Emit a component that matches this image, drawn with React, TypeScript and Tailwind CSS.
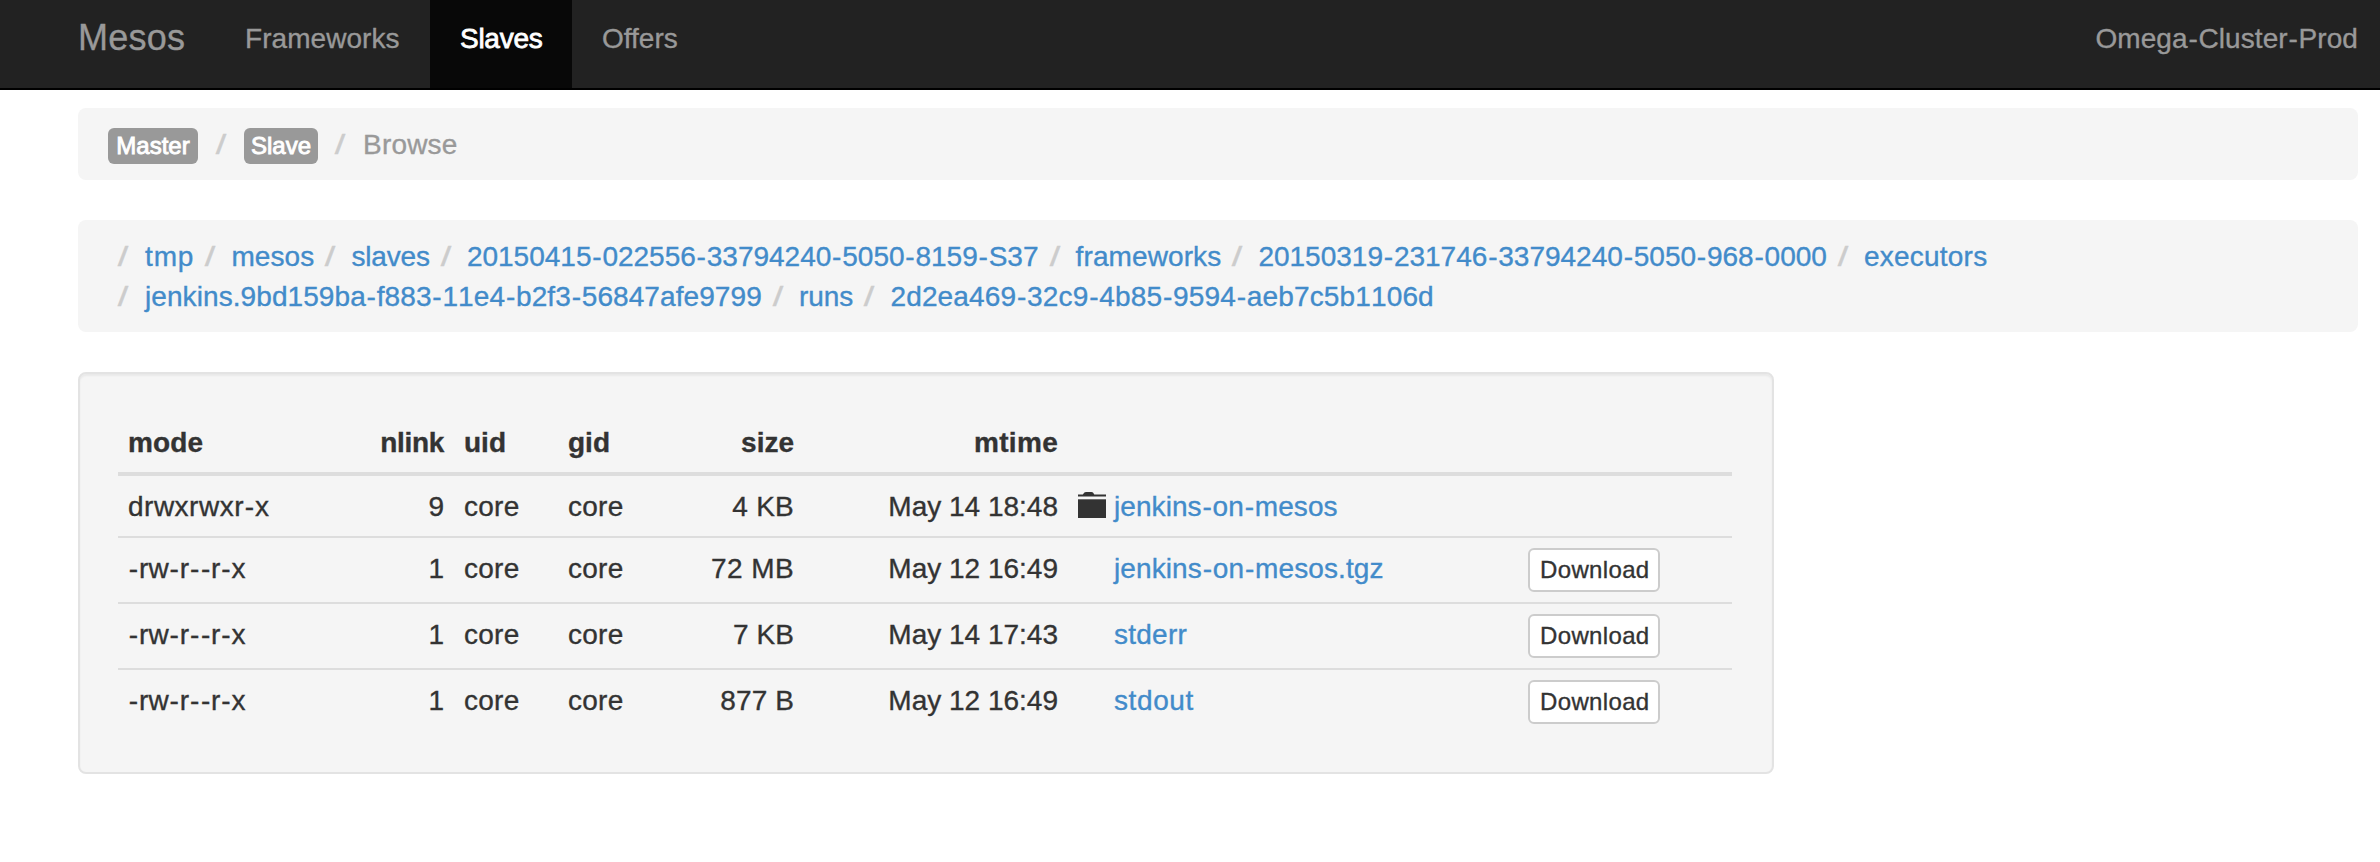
import { Fragment } from "react";

/** Text whose hyphens get a little breathing room on both sides. */
function Dashed({ text }: { text: string }) {
  return (
    <>
      {text.split("-").map((part, i) => (
        <Fragment key={i}>
          {i > 0 && <span className="px-[0.8px] tracking-normal">-</span>}
          {part}
        </Fragment>
      ))}
    </>
  );
}

function Slash() {
  return <span className="inline-block scale-x-[1.35] text-[#ccc]">/</span>;
}

const pathRows = [
  [
    { name: "tmp", cls: "tracking-[0.88px]" },
    { name: "mesos", cls: "tracking-[0.1px]" },
    { name: "slaves", cls: "tracking-[-0.18px]" },
    { name: "20150415-022556-33794240-5050-8159-S37", cls: "" },
    { name: "frameworks", cls: "tracking-[0.1px]" },
    { name: "20150319-231746-33794240-5050-968-0000", cls: "" },
    { name: "executors", cls: "tracking-[0.22px]" },
  ],
  [
    { name: "jenkins.9bd159ba-f883-11e4-b2f3-56847afe9799", cls: "tracking-[0.08px]" },
    { name: "runs", cls: "" },
    { name: "2d2ea469-32c9-4b85-9594-aeb7c5b1106d", cls: "tracking-[0.14px]" },
  ],
];

const files = [
  { mode: "drwxrwxr-x", modeCls: "tracking-[0.5px]", nlink: 9, size: "4 KB", sizeCls: "tracking-[0.25px]", mtime: "May 14 18:48", name: "jenkins-on-mesos", cls: "tracking-[0.07px]", dir: true },
  { mode: "-rw-r--r-x", modeCls: "tracking-[0.15px]", nlink: 1, size: "72 MB", sizeCls: "tracking-[0.4px]", mtime: "May 12 16:49", name: "jenkins-on-mesos.tgz", cls: "tracking-[0.1px]", dir: false },
  { mode: "-rw-r--r-x", modeCls: "tracking-[0.15px]", nlink: 1, size: "7 KB", sizeCls: "tracking-[0.1px]", mtime: "May 14 17:43", name: "stderr", cls: "tracking-[0.25px]", dir: false },
  { mode: "-rw-r--r-x", modeCls: "tracking-[0.15px]", nlink: 1, size: "877 B", sizeCls: "tracking-[0.1px]", mtime: "May 12 16:49", name: "stdout", cls: "tracking-[0.6px]", dir: false },
];

function FolderIcon() {
  return (
    <svg width="28" height="26" viewBox="0 0 28 26" className="mt-[5px] shrink-0" fill="#333">
      <path d="M0 4.5V2.4H4.8L6.4 0.6Q6.9 0 8 0H13.4Q14.6 0 15 0.6L16.3 2.4H28V4.5Z" />
      <path d="M0 7.3H28V26H0Z" />
    </svg>
  );
}

const columns = "grid grid-cols-[252px_84px_104px_110px_136px_264px_450px_212px]";

export default function App() {
  return (
    <div className="min-h-[862px] bg-white font-['Liberation_Sans',Arial,sans-serif] text-[28px] leading-[40px] text-[#333] [-webkit-text-stroke:0.35px_currentColor]">
      <nav className="flex h-[90px] items-stretch border-b-2 border-black bg-[#222] pr-[22px] pl-[78px] text-[#999]">
        <a className="w-[138px] pt-[18px] text-[36px] leading-[40px] tracking-[0.27px]">Mesos</a>
        <a className="w-[214px] pt-[19px] pl-[29px] tracking-[0.05px]">Frameworks</a>
        <a className="w-[142px] bg-[#080808] pt-[19px] pl-[30px] tracking-[-0.27px] text-white [-webkit-text-stroke:0.8px_white]">
          Slaves
        </a>
        <a className="pt-[19px] pl-[30px]">Offers</a>
        <span className="ml-auto pt-[19px] tracking-[0.06px]">
          <Dashed text="Omega-Cluster-Prod" />
        </span>
      </nav>

      <main className="pt-[18px] pr-[22px] pl-[78px]">
        <ul className="flex h-[72px] items-start rounded-lg bg-[#f5f5f5] pt-[17px] pl-[30px] text-[#999]">
          <li className="mt-[3px] flex h-9 w-[90px] items-center justify-center rounded-md bg-[#999] text-[24px] leading-[36px] text-white [-webkit-text-stroke:0.9px_white]">
            Master
          </li>
          <li className="w-[46px] pl-[19px]"><Slash /></li>
          <li className="mt-[3px] flex h-9 w-[74px] items-center justify-center rounded-md bg-[#999] text-[24px] leading-[36px] text-white [-webkit-text-stroke:0.9px_white]">
            Slave
          </li>
          <li className="w-[45px] pl-[18px]"><Slash /></li>
          <li className="tracking-[0.2px]">Browse</li>
        </ul>

        <div className="mt-10 h-[112px] rounded-lg bg-[#f5f5f5] pt-[17px] pl-[38px] text-[#428bca] [font-kerning:none]">
          {pathRows.map((row, r) => (
            <ul key={r} className="flex">
              {row.map((item, i) => (
                <li key={item.name} className="flex">
                  <span className={i === 0 ? "w-[29px] pl-[3px]" : "w-[37.1px] pl-[12px]"}>
                    <Slash />
                  </span>
                  <a className={item.cls}>
                    <Dashed text={item.name} />
                  </a>
                </li>
              ))}
            </ul>
          ))}
        </div>

        <section className="mt-10 h-[402px] w-[1696px] rounded-lg border-2 border-[#e3e3e3] bg-[#f5f5f5] py-[38px] pr-[40px] pl-[38px] shadow-[inset_0_2px_2px_rgba(0,0,0,0.05)]">
          <div className={`${columns} h-[64px] border-b-4 border-[#ddd] pt-[11px] font-bold`}>
            <span className="pl-[10px] tracking-[0.15px]">mode</span>
            <span className="pr-[10px] text-right tracking-[-0.3px]">nlink</span>
            <span className="pl-[10px]">uid</span>
            <span className="pl-[10px]">gid</span>
            <span className="pr-[10px] text-right">size</span>
            <span className="pr-[10px] text-right tracking-[0.3px]">mtime</span>
          </div>
          {files.map((f, i) => (
            <div
              key={f.name}
              className={i === 0 ? `${columns} h-[60px] pt-[11px]` : `${columns} h-[66px] border-t-2 border-[#ddd] pt-[11px]`}
            >
              <span className={`pl-[10px] ${f.modeCls}`}>
                <Dashed text={f.mode} />
              </span>
              <span className="pr-[10px] text-right">{f.nlink}</span>
              <span className="pl-[10px] tracking-[0.25px]">core</span>
              <span className="pl-[10px] tracking-[0.25px]">core</span>
              <span className={`pr-[10px] text-right ${f.sizeCls}`}>{f.size}</span>
              <span className="pr-[10px] text-right">{f.mtime}</span>
              <span className="flex pl-[10px]">
                <span className="flex w-[36px] shrink-0">{f.dir && <FolderIcon />}</span>
                <a className={`text-[#428bca] ${f.cls}`}>
                  <Dashed text={f.name} />
                </a>
              </span>
              <span className="-mt-px pl-[10px]">
                {!f.dir && (
                  <button className="flex h-[44px] w-[132px] items-center rounded-md border-2 border-[#ccc] bg-white pl-[10px] text-[24px] leading-[36px] tracking-[0.35px] text-[#333]">
                    Download
                  </button>
                )}
              </span>
            </div>
          ))}
        </section>
      </main>
    </div>
  );
}
